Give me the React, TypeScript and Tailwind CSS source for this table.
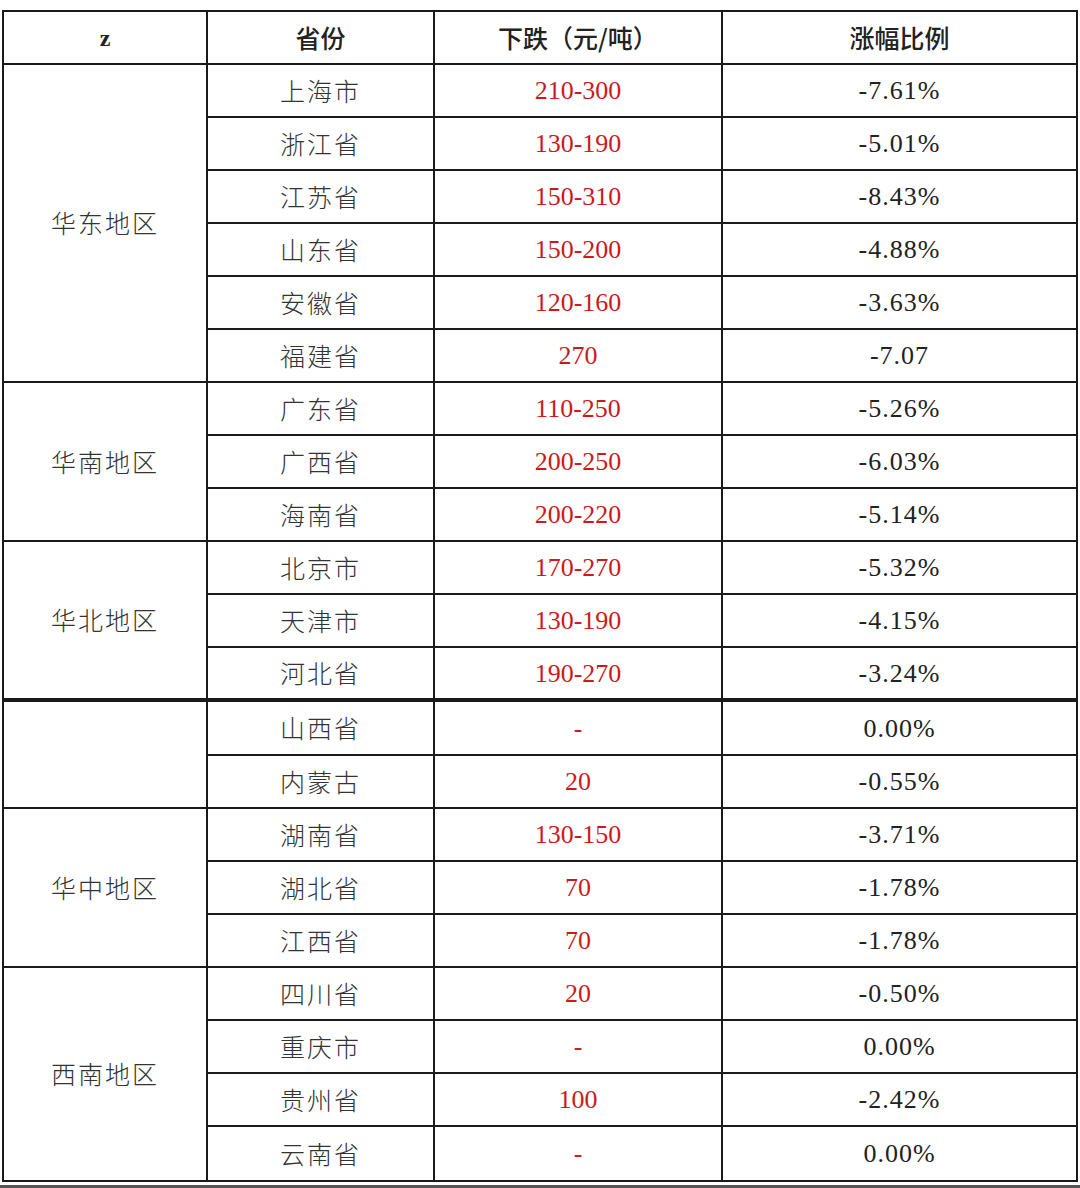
import React from "react";

type Row = { province: string; drop: string; ratio: string };
type Group = { region: string; rows: Row[]; thickTop?: boolean };

const groups: Group[] = [
  {
    region: "华东地区",
    rows: [
      { province: "上海市", drop: "210-300", ratio: "-7.61%" },
      { province: "浙江省", drop: "130-190", ratio: "-5.01%" },
      { province: "江苏省", drop: "150-310", ratio: "-8.43%" },
      { province: "山东省", drop: "150-200", ratio: "-4.88%" },
      { province: "安徽省", drop: "120-160", ratio: "-3.63%" },
      { province: "福建省", drop: "270", ratio: "-7.07" },
    ],
  },
  {
    region: "华南地区",
    rows: [
      { province: "广东省", drop: "110-250", ratio: "-5.26%" },
      { province: "广西省", drop: "200-250", ratio: "-6.03%" },
      { province: "海南省", drop: "200-220", ratio: "-5.14%" },
    ],
  },
  {
    region: "华北地区",
    rows: [
      { province: "北京市", drop: "170-270", ratio: "-5.32%" },
      { province: "天津市", drop: "130-190", ratio: "-4.15%" },
      { province: "河北省", drop: "190-270", ratio: "-3.24%" },
    ],
  },
  {
    region: "",
    thickTop: true,
    rows: [
      { province: "山西省", drop: "-", ratio: "0.00%" },
      { province: "内蒙古", drop: "20", ratio: "-0.55%" },
    ],
  },
  {
    region: "华中地区",
    rows: [
      { province: "湖南省", drop: "130-150", ratio: "-3.71%" },
      { province: "湖北省", drop: "70", ratio: "-1.78%" },
      { province: "江西省", drop: "70", ratio: "-1.78%" },
    ],
  },
  {
    region: "西南地区",
    rows: [
      { province: "四川省", drop: "20", ratio: "-0.50%" },
      { province: "重庆市", drop: "-", ratio: "0.00%" },
      { province: "贵州省", drop: "100", ratio: "-2.42%" },
      { province: "云南省", drop: "-", ratio: "0.00%" },
    ],
  },
];

const cjk = "font-['Noto_Sans_CJK_SC',sans-serif]";
const num = "font-['Liberation_Serif','Noto_Sans_CJK_SC',serif]";

export default function App() {
  return (
    <div className="w-[1080px] h-[1188px] bg-white pt-[10px] pl-[2px] overflow-hidden">
      <table className="table-fixed border-collapse border-2 border-[#1a1a1a] w-[1074px] text-center">
        <colgroup>
          <col className="w-[204px]" />
          <col className="w-[227px]" />
          <col className="w-[288px]" />
          <col className="w-[355px]" />
        </colgroup>
        <thead>
          <tr className="h-[53px]">
            <th className={`border-2 border-[#1a1a1a] text-[24px] font-bold text-[#222] ${num}`}>z</th>
            <th className={`border-2 border-[#1a1a1a] text-[25px] font-medium text-[#222] ${cjk}`}>省份</th>
            <th className={`border-2 border-[#1a1a1a] text-[25px] font-medium text-[#222] ${cjk}`}>下跌（元/吨）</th>
            <th className={`border-2 border-[#1a1a1a] text-[25px] font-medium text-[#222] ${cjk}`}>涨幅比例</th>
          </tr>
        </thead>
        <tbody>
          {groups.map((g, gi) =>
            g.rows.map((r, i) => {
              const top = g.thickTop && i === 0 ? "border-t-4" : "";
              const tall = (g.thickTop && i === 0) || (gi === groups.length - 1 && i === g.rows.length - 1);
              return (
                <tr key={r.province} className={tall ? "h-[55px]" : "h-[53px]"}>
                  {i === 0 && (
                    <td
                      rowSpan={g.rows.length}
                      className={`border-2 border-[#1a1a1a] ${top} text-[25px] font-light text-[#333] tracking-[2px] ${cjk}`}
                    >
                      {g.region}
                    </td>
                  )}
                  <td className={`border-2 border-[#1a1a1a] ${top} text-[25px] font-light text-[#333] tracking-[2px] ${cjk}`}>
                    {r.province}
                  </td>
                  <td className={`border-2 border-[#1a1a1a] ${top} text-[26px] text-[#cc1a1a] ${num}`}>
                    {r.drop}
                  </td>
                  <td className={`border-2 border-[#1a1a1a] ${top} text-[26px] text-[#222] tracking-[1px] ${num}`}>
                    {r.ratio}
                  </td>
                </tr>
              );
            })
          )}
        </tbody>
      </table>
      <div className="mt-[3px] -ml-[2px] h-[3px] w-[1080px] bg-[#555]" />
    </div>
  );
}
